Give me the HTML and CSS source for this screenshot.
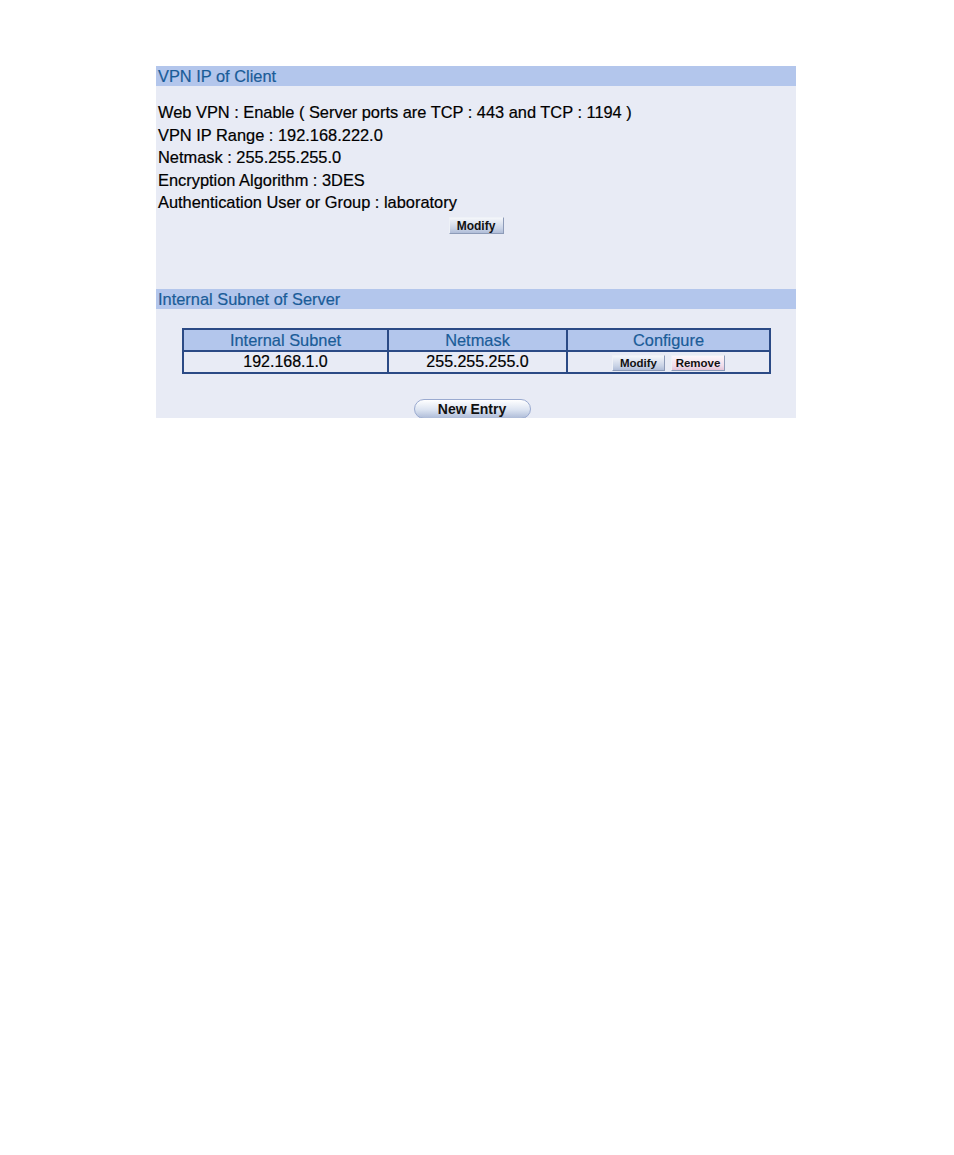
FILE: index.html
```html
<!DOCTYPE html>
<html>
<head>
<meta charset="utf-8">
<link rel="stylesheet" href="styles.css">
</head>
<body>
<div class="panel">
  <div class="bar">VPN IP of Client</div>
  <div class="info">
    <div class="line">Web VPN : Enable ( Server ports are TCP : 443 and TCP : 1194 )</div>
    <div class="line">VPN IP Range : 192.168.222.0</div>
    <div class="line">Netmask : 255.255.255.0</div>
    <div class="line">Encryption Algorithm : 3DES</div>
    <div class="line">Authentication User or Group : laboratory</div>
    <div class="center"><span class="btn big">Modify</span></div>
  </div>
  <div class="bar">Internal Subnet of Server</div>
  <div class="tablewrap">
    <table class="grid">
      <tr><th class="c1">Internal Subnet</th><th class="c2">Netmask</th><th>Configure</th></tr>
      <tr><td>192.168.1.0</td><td>255.255.255.0</td><td><span class="btn sm">Modify</span><span class="btn sm pink">Remove</span></td></tr>
    </table>
  </div>
  <div class="center newwrap"><span class="pill">New Entry</span></div>
</div>
</body>
</html>
```

FILE: styles.css
```css
html, body { margin: 0; padding: 0; background: #fff; }
body { font-family: "Liberation Sans", Arial, sans-serif; }
.panel {
  margin: 66px 0 0 156px;
  width: 640px;
  height: 352px;
  background: #e8ebf5;
  overflow: hidden;
}
.bar {
  height: 20px;
  line-height: 20px;
  background: #b3c6ec;
  color: #1a5c98;
  font-size: 16.4px;
  padding-left: 2px;
  -webkit-text-stroke: 0.2px #1a5c98;
}
.info { padding: 15px 0 0 2px; height: 203px; box-sizing: border-box; }
.line { font-size: 16.4px; line-height: 22.5px; color: #000; -webkit-text-stroke: 0.2px #000; }
.center { text-align: center; }
.info .center { margin-top: 2px; }
.btn {
  display: inline-block;
  font-size: 11.5px;
  font-weight: bold;
  color: #111;
  text-align: center;
  height: 17px;
  line-height: 16px;
  background: linear-gradient(#f4f6fa, #c9d3e6 70%, #b0bdd8);
  border-right: 1px solid #8d9bb8;
  border-bottom: 1px solid #8d9bb8;
  border-top: 1px solid #eef1f7;
  border-left: 1px solid #eef1f7;
  box-sizing: border-box;
  vertical-align: middle;
}
.btn.big { width: 55px; font-size: 12px; position: relative; left: -1px; }
.tablewrap { padding: 19px 0 0 26px; }
.grid {
  border-collapse: collapse;
  width: 589px;
  border: 2px solid #2b4a85;
}
.grid th, .grid td {
  border: 2px solid #2b4a85;
  text-align: center;
  font-size: 16.4px;
  font-weight: normal;
  height: 20px;
  padding: 0;
  line-height: 20px;
}
.grid th { background: #b3c6ec; color: #1a5c98; -webkit-text-stroke: 0.2px #1a5c98; }
.grid td { background: #e8ebf5; color: #000; font-size: 16px; -webkit-text-stroke: 0.2px #000; }
.grid .c1 { width: 203px; }
.grid .c2 { width: 177px; }
.btn.sm { height: 16px; line-height: 15px; width: 53px; font-size: 11.5px; -webkit-text-stroke: 0; }
.btn.pink { background: linear-gradient(#fcf6fa, #f0dcea 70%, #e2c4d8); margin-left: 6px; width: 54px; }
.newwrap { padding-top: 25px; }
.pill {
  display: inline-block;
  width: 117px;
  height: 20px;
  line-height: 19px;
  border-radius: 10px;
  font-size: 14px;
  font-weight: bold;
  color: #111;
  background: linear-gradient(#ffffff, #dbe3f1 55%, #aebcd8);
  border: 1px solid #9aaad0;
  box-sizing: border-box;
  position: relative;
  left: -4px;
}
```
